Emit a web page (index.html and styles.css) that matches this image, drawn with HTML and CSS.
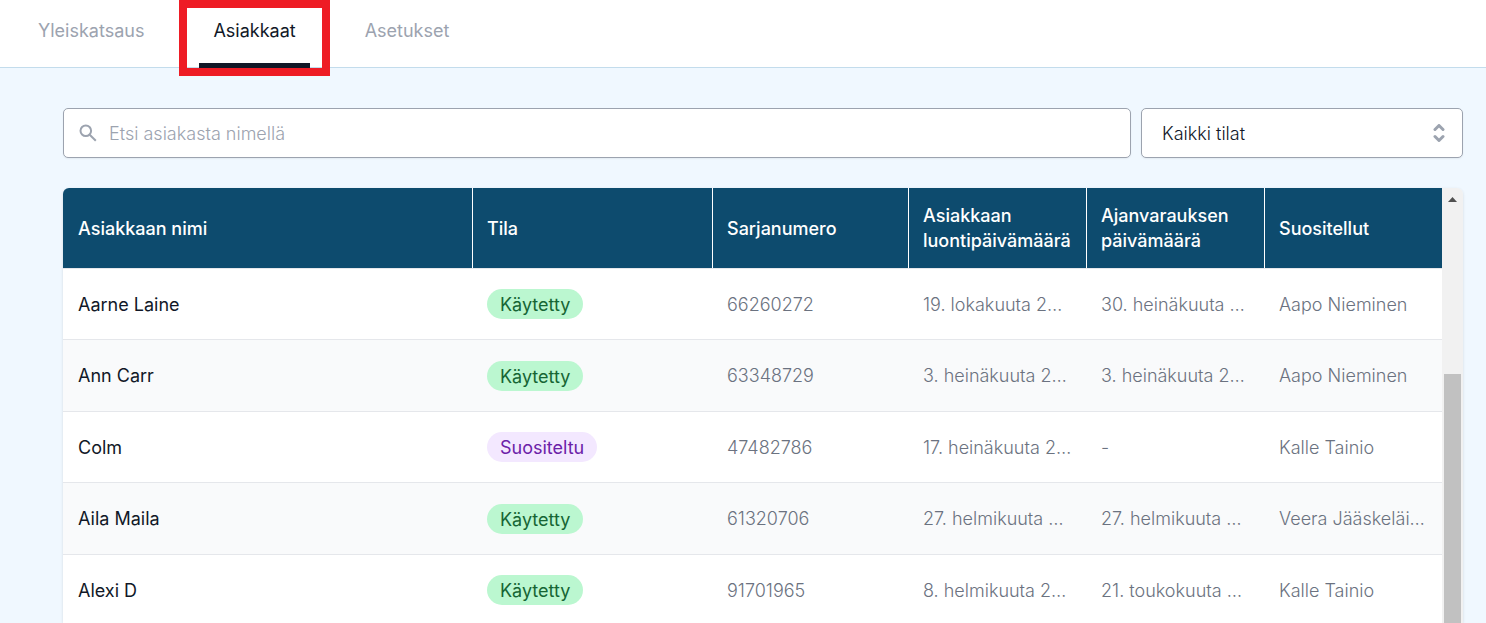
FILE: index.html
```html
<!DOCTYPE html>
<html lang="fi">
<head>
<meta charset="utf-8">
<meta name="viewport" content="width=device-width, initial-scale=1">
<title>Asiakkaat</title>
<link rel="stylesheet" href="styles.css">
</head>
<body>
<nav class="tabs">
  <a class="tab" href="#yleiskatsaus">Yleiskatsaus</a>
  <a class="tab tab-active" href="#asiakkaat" aria-current="page">Asiakkaat<span class="tab-highlight"></span></a>
  <a class="tab" href="#asetukset">Asetukset</a>
</nav>
<main class="content">
  <form class="filters">
    <label class="search">
      <svg class="search-icon" viewBox="0 0 18 18" aria-hidden="true"><circle cx="6.8" cy="6.8" r="5.3"/><path d="M10.7 10.7L16.8 16.8"/></svg>
      <input class="search-input" type="search" placeholder="Etsi asiakasta nimellä" aria-label="Etsi asiakasta nimellä">
    </label>
    <label class="status">
      <select class="status-select" aria-label="Tila"><option>Kaikki tilat</option></select>
      <svg class="status-icon" viewBox="0 0 12 18" aria-hidden="true"><path d="M2 5.5L6 1.5L10 5.5M2 12.5L6 16.5L10 12.5"/></svg>
    </label>
  </form>
  <section class="list">
    <table class="customers">
      <colgroup><col><col class="col-state"><col class="col-serial"><col class="col-date"><col class="col-date"><col class="col-date"></colgroup>
      <thead>
        <tr><th scope="col">Asiakkaan nimi</th><th scope="col">Tila</th><th scope="col">Sarjanumero</th><th scope="col">Asiakkaan luontipäivämäärä</th><th scope="col">Ajanvarauksen päivämäärä</th><th scope="col">Suositellut</th></tr>
      </thead>
      <tbody>
        <tr><td class="name">Aarne Laine</td><td><span class="badge badge-used">Käytetty</span></td><td>66260272</td><td>19. lokakuuta 2…</td><td>30. heinäkuuta …</td><td>Aapo Nieminen</td></tr>
        <tr><td class="name">Ann Carr</td><td><span class="badge badge-used">Käytetty</span></td><td>63348729</td><td>3. heinäkuuta 2…</td><td>3. heinäkuuta 2…</td><td>Aapo Nieminen</td></tr>
        <tr><td class="name">Colm</td><td><span class="badge badge-referred">Suositeltu</span></td><td>47482786</td><td>17. heinäkuuta 2…</td><td>-</td><td>Kalle Tainio</td></tr>
        <tr><td class="name">Aila Maila</td><td><span class="badge badge-used">Käytetty</span></td><td>61320706</td><td>27. helmikuuta …</td><td>27. helmikuuta …</td><td>Veera Jääskeläi…</td></tr>
        <tr><td class="name">Alexi D</td><td><span class="badge badge-used">Käytetty</span></td><td>91701965</td><td>8. helmikuuta 2…</td><td>21. toukokuuta …</td><td>Kalle Tainio</td></tr>
      </tbody>
    </table>
    <div class="scrollbar" aria-hidden="true">
      <svg class="scroll-arrow" viewBox="0 0 9 5"><path d="M4.5 0L9 5H0Z"/></svg>
      <div class="scroll-thumb"></div>
    </div>
  </section>
</main>
</body>
</html>
```

FILE: styles.css
```css
* {
  box-sizing: border-box;
}

body {
  margin: 0;
  height: 100vh;
  display: flex;
  flex-direction: column;
  overflow: hidden;
  background: #f0f8ff;
  color: #111827;
  font: 300 18px/25px Inter, "Liberation Sans", sans-serif;
}

.tabs {
  display: flex;
  flex: none;
  gap: 41px;
  padding-left: 24px;
  background: #fff;
  box-shadow: inset 0 -1px #c3dcec;
}

.tab {
  position: relative;
  padding: 18px 14px 20px;
  border-bottom: 5px solid transparent;
  color: #9ca3af;
  font-weight: 400;
  text-decoration: none;
}

.tab-active {
  border-color: #111827;
  color: #111827;
}

.tab-highlight {
  position: absolute;
  inset: 0 -20px -13px;
  border: 8px solid #ee1c25;
}

.content {
  flex: 1;
  min-height: 0;
  display: flex;
  flex-direction: column;
  gap: 30px;
  padding: 40px 23px 0 63px;
}

.filters {
  display: flex;
  flex: none;
  gap: 10px;
}

.search,
.status {
  display: flex;
  align-items: center;
  height: 50px;
  border: 1px solid #9ca3af;
  border-radius: 5px;
  background: #fff;
  box-shadow: 0 1px 2px rgba(0, 0, 0, 0.06);
}

.search {
  flex: 1;
  gap: 12px;
  padding: 0 15px;
}

.search-icon {
  width: 18px;
  height: 18px;
  fill: none;
  stroke: #9ca3af;
  stroke-width: 2;
}

.search-input {
  flex: 1;
  min-width: 0;
  padding: 0;
  border: 0;
  outline: 0;
  background: none;
  color: inherit;
  font: inherit;
}

.search-input::placeholder {
  color: #9ca3af;
}

.status {
  width: 322px;
  padding: 0 17px 0 20px;
}

.status-select {
  flex: 1;
  padding: 0;
  border: 0;
  outline: 0;
  appearance: none;
  background: none;
  color: inherit;
  font: inherit;
}

.status-icon {
  width: 12px;
  height: 18px;
  fill: none;
  stroke: #9ca3af;
  stroke-width: 3;
  stroke-linecap: round;
  stroke-linejoin: round;
}

.list {
  flex: 1;
  min-height: 0;
  display: flex;
  align-items: flex-start;
  overflow: hidden;
  border-radius: 6px 6px 0 0;
  box-shadow: 0 1px 3px rgba(0, 0, 0, 0.12);
}

.customers {
  flex: 1;
  width: 100%;
  table-layout: fixed;
  border-collapse: separate;
  border-spacing: 0;
}

.col-state {
  width: 240px;
}

.col-serial {
  width: 196px;
}

.col-date {
  width: 178px;
}

th {
  height: 80px;
  padding: 0 15px;
  background: #0d4b6e;
  color: #fff;
  font-weight: 500;
  text-align: left;
}

th + th {
  box-shadow: inset 1px 0 #fff;
}

td {
  height: 71px;
  padding: 0 15px;
  border-top: 1px solid #e5e7eb;
  background: #fff;
  color: #6b7280;
  white-space: nowrap;
}

tr:nth-child(even) td {
  height: 72px;
  background: #f9fafb;
}

td.name {
  color: #111827;
  font-weight: 400;
}

.badge {
  display: inline-block;
  padding: 3px 13px 2px;
  border-radius: 15px;
  font-weight: 400;
  vertical-align: middle;
}

.badge-used {
  background: #bbf7d0;
  color: #166534;
}

.badge-referred {
  background: #f3e8ff;
  color: #6b21a8;
}

.scrollbar {
  align-self: stretch;
  flex: none;
  width: 21px;
  display: flex;
  flex-direction: column;
  align-items: center;
  background: #f1f1f1;
}

.scroll-arrow {
  flex: none;
  width: 9px;
  height: 5px;
  margin-top: 9px;
  fill: #505050;
}

.scroll-thumb {
  flex: 1;
  width: 17px;
  margin-top: 172px;
  background: #c1c1c1;
}
```
